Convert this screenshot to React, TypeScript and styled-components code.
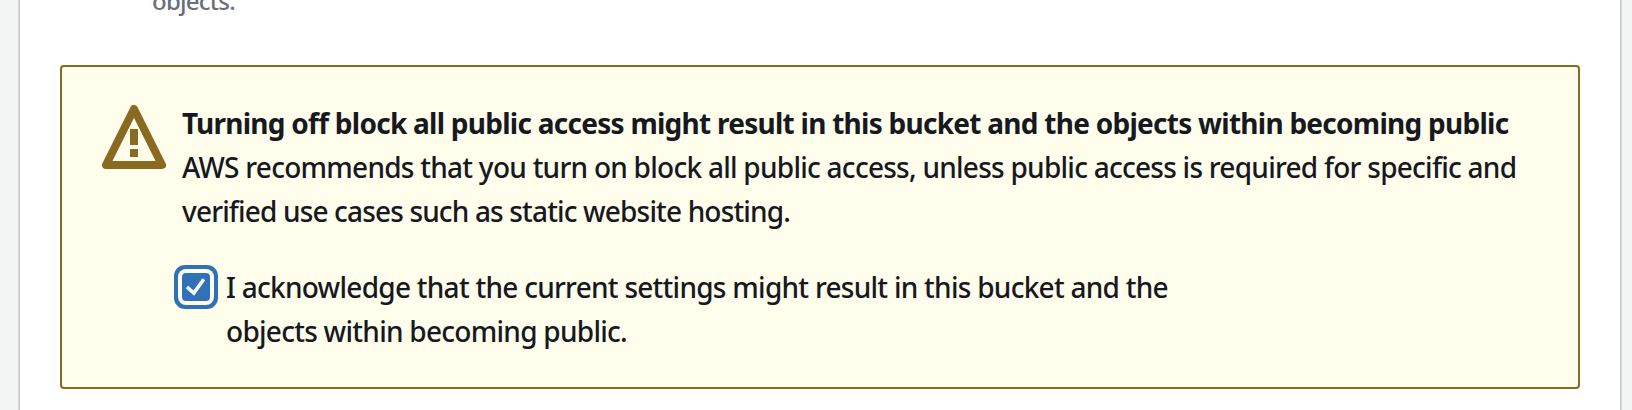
import React from "react";
import styled, { createGlobalStyle } from "styled-components";

const GlobalStyle = createGlobalStyle`
  * { box-sizing: border-box; }
  html, body { margin: 0; }
  body {
    background: #f2f3f3;
    color: #16191f;
    font-family: "Noto Sans", "Open Sans", sans-serif;
    font-size: 28px;
    line-height: 44px;
    overflow: hidden;
  }
`;

const Page = styled.main`
  height: 410px;
  padding: 0 12px 0 20px;
  overflow: hidden;
`;

const Panel = styled.section`
  display: flow-root;
  height: 100%;
  padding: 0 40px;
  background: #fff;
  box-shadow: 0 0 0 1px #bcc2c6, 0 0 0 2px #d9dcdf;
`;

const Description = styled.p`
  margin: -17px 0 46px;
  padding-left: 92px;
  color: #687078;
  font-size: 24px;
  font-weight: 500;
  line-height: 36px;
  letter-spacing: -0.75px;
`;

const Alert = styled.div`
  display: flex;
  gap: 16px;
  height: 324px;
  padding: 34px 40px;
  background: #fffdeb;
  border: 2px solid #8a6a20;
  border-radius: 4px;
`;

const WarningIcon = styled.svg`
  flex: none;
  width: 64px;
  height: 64px;
  margin-top: 4px;
`;

const Content = styled.div`
  flex: 1;
  min-width: 0;
`;

const Line = styled.span<{ $tracking: number; $bold?: boolean }>`
  display: block;
  white-space: nowrap;
  font-weight: ${(p) => (p.$bold ? 700 : 500)};
  letter-spacing: ${(p) => p.$tracking}px;
`;

const Acknowledge = styled.label`
  display: flex;
  gap: 16px;
  margin-top: 32px;
`;

const Checkbox = styled.span`
  flex: none;
  width: 28px;
  height: 28px;
  margin-top: 8px;
  border-radius: 4px;
  background: #2f72b8;
  box-shadow: 0 0 0 4px #fffdeb, 0 0 0 8px #2f72b8;

  svg { display: block; }
`;

export default function App() {
  return (
    <>
      <GlobalStyle />
      <Page>
        <Panel>
          <Description>objects.</Description>
          <Alert role="alert">
            <WarningIcon viewBox="0 0 64 64" fill="none">
              <path d="M32 4 60 60H4Z" stroke="#8a6a20" strokeWidth="8" strokeLinejoin="round" />
              <path d="M28 24h8v16h-8zM28 44h8v8h-8z" fill="#8a6a20" />
            </WarningIcon>
            <Content>
              <Line $bold $tracking={-0.735}>
                Turning off block all public access might result in this bucket and the objects within becoming public
              </Line>
              <Line $tracking={-0.74}>
                AWS recommends that you turn on block all public access, unless public access is required for specific and
              </Line>
              <Line $tracking={-0.84}>verified use cases such as static website hosting.</Line>
              <Acknowledge>
                <Checkbox role="checkbox" aria-checked="true">
                  <svg width="28" height="28" viewBox="0 0 28 28" fill="none">
                    <path d="M5 14 11.8 20 21.8 6.2" stroke="#fff" strokeWidth="3.6" />
                  </svg>
                </Checkbox>
                <span>
                  <Line $tracking={-0.73}>I acknowledge that the current settings might result in this bucket and the</Line>
                  <Line $tracking={-0.73}>objects within becoming public.</Line>
                </span>
              </Acknowledge>
            </Content>
          </Alert>
        </Panel>
      </Page>
    </>
  );
}
